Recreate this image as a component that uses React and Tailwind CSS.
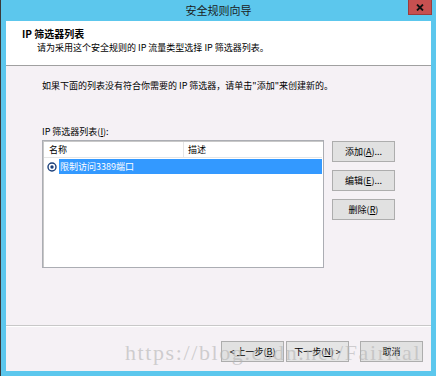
export default function App() {
  return (
    <div className="relative w-[436px] h-[376px] bg-[#5cc7ed] border-l border-[#3a3a3a] flex flex-col text-[9px] text-black font-['Noto_Sans_CJK_SC','Noto_Sans',sans-serif] leading-none">
      <div className="h-[21px] flex items-center justify-center text-[11px] text-[#1a1a1a]">安全规则向导</div>
      <div className="absolute top-0 right-[4px] w-[24px] h-[15px] bg-[#c75050] border border-[#9d3c3c] border-t-0 flex items-center justify-center">
        <svg width="8" height="7" viewBox="0 0 8 7"><path d="M1 0.5 L7 6.5 M7 0.5 L1 6.5" stroke="#111" strokeWidth="1.8" /></svg>
      </div>

      <div className="flex-1 ml-[5px] mr-[5px] mb-[5px] flex flex-col bg-[#f5f1f5]">
        <div className="h-[45px] bg-white border-b border-[#a0a0a0] pl-[16px] pt-[8px]">
          <div className="font-bold text-[10px]">IP 筛选器列表</div>
          <div className="pl-[15px] mt-[4px]">请为采用这个安全规则的 IP 流量类型选择 IP 筛选器列表。</div>
        </div>

        <div className="flex-1 pl-[36px] pt-[15px]">
          <div>如果下面的列表没有符合你需要的 IP 筛选器，请单击"添加"来创建新的。</div>
          <div className="mt-[37px]">IP 筛选器列表(<span className="underline">I</span>):</div>
          <div className="flex mt-[4px]">
            <div className="w-[282px] h-[128px] bg-white border border-[#abadb3] shadow-[inset_1px_1px_0_#c8c8c8] p-[1px]">
              <div className="flex h-[16px] border-b border-[#e5e5e5]">
                <div className="w-[140px] pl-[5px] flex items-center border-r border-[#e5e5e5]">名称</div>
                <div className="flex-1 pl-[4px] flex items-center">描述</div>
              </div>
              <div className="flex items-center mt-[1px] h-[15px]">
                <div className="w-[15px] flex justify-center">
                  <svg width="10" height="10" viewBox="0 0 10 10">
                    <circle cx="5" cy="5" r="4" fill="none" stroke="#1b3f7a" strokeWidth="1.4" />
                    <circle cx="5" cy="5" r="1.7" fill="#1b3f7a" />
                  </svg>
                </div>
                <div className="flex-1 h-[15px] bg-[#3399ff] text-white pl-[1px] flex items-center">限制访问3389端口</div>
              </div>
            </div>
            <div className="ml-[8px] flex flex-col">
              <Btn className="mt-[1px]">添加(<span className="underline">A</span>)...</Btn>
              <Btn className="mt-[8px]">编辑(<span className="underline">E</span>)...</Btn>
              <Btn className="mt-[8px]">删除(<span className="underline">R</span>)</Btn>
            </div>
          </div>
        </div>

        <div className="h-[2px] border-t border-[#c8c8c8] bg-white" />
        <div className="h-[44px] flex items-start justify-end pr-[8px] pt-[14px]">
          <Btn>&lt; 上一步(<span className="underline">B</span>)</Btn>
          <Btn className="ml-[2px] border-[#5a9bd0] bg-[#e5e5e5]">下一步(<span className="underline">N</span>) &gt;</Btn>
          <Btn className="ml-[11px]">取消</Btn>
        </div>
      </div>

      <div className="absolute left-[124px] top-[342px] text-[22px] tracking-[1.6px] text-[#b4b4b4]/60 font-['Liberation_Serif',serif] pointer-events-none whitespace-nowrap">
        https://blog.csdn.net/Fairital
      </div>
    </div>
  );
}

function Btn({ children, className = "" }) {
  return (
    <div className={`w-[63px] h-[21px] flex items-center justify-center whitespace-nowrap border border-[#adadad] bg-[#e1e1e1] ${className}`}>
      {children}
    </div>
  );
}
